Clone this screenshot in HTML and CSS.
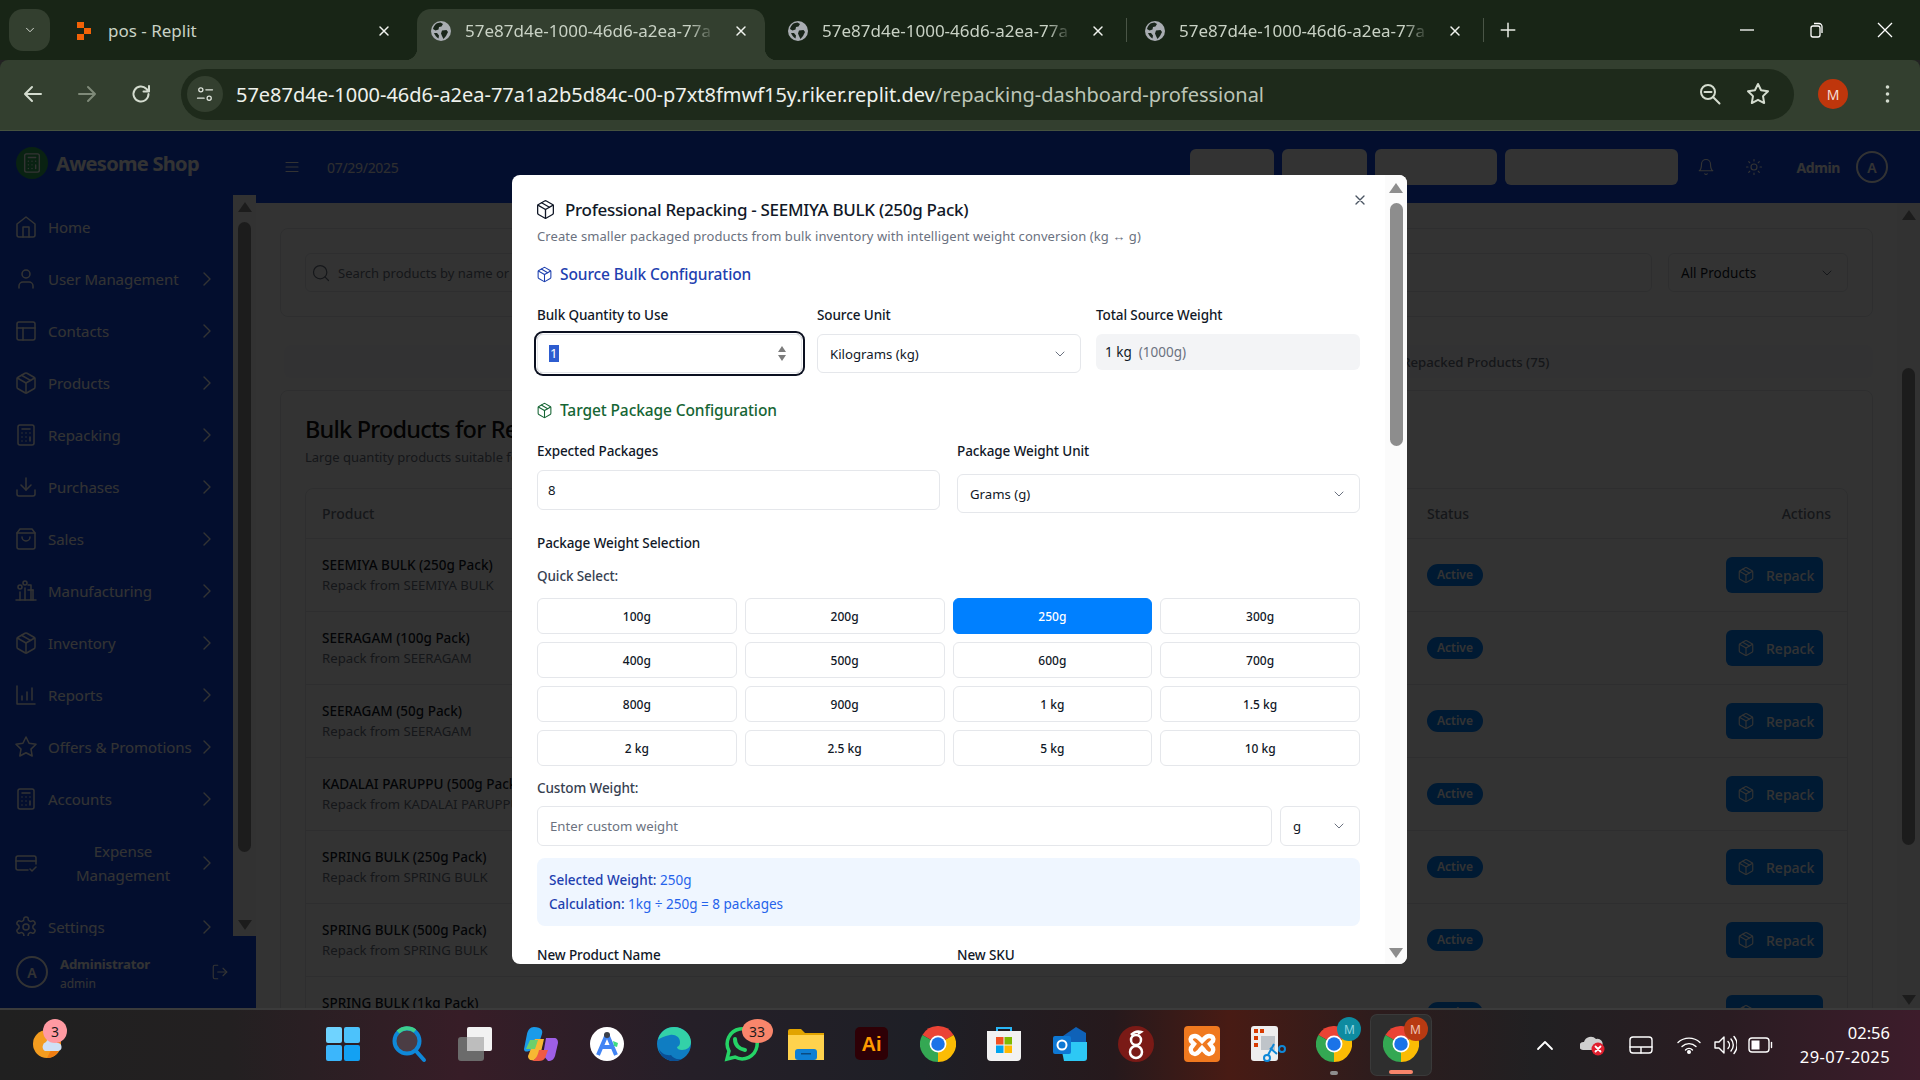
FILE: index.html
```html
<!DOCTYPE html>
<html lang="en">
<head>
<meta charset="UTF-8">
<meta name="viewport" content="width=device-width, initial-scale=1.0">
<title>Professional Repacking</title>
<link rel="stylesheet" href="styles.css">
</head>
<body>

<!-- icon sprite -->
<svg class="sprite" xmlns="http://www.w3.org/2000/svg">
    <symbol id="i-home" viewBox="0 0 24 24"><path d="m3 9 9-7 9 7v11a2 2 0 0 1-2 2H5a2 2 0 0 1-2-2z"/><polyline points="9 22 9 12 15 12 15 22"/></symbol>
    <symbol id="i-user" viewBox="0 0 24 24"><path d="M19 21v-2a4 4 0 0 0-4-4H9a4 4 0 0 0-4 4v2"/><circle cx="12" cy="7" r="4"/></symbol>
    <symbol id="i-layout" viewBox="0 0 24 24"><rect width="18" height="18" x="3" y="3" rx="2"/><path d="M3 9h18"/><path d="M9 21V9"/></symbol>
    <symbol id="i-package" viewBox="0 0 24 24"><path d="m7.5 4.27 9 5.15"/><path d="M21 8a2 2 0 0 0-1-1.73l-7-4a2 2 0 0 0-2 0l-7 4A2 2 0 0 0 3 8v8a2 2 0 0 0 1 1.73l7 4a2 2 0 0 0 2 0l7-4A2 2 0 0 0 21 16Z"/><path d="m3.3 7 8.7 5 8.7-5"/><path d="M12 22V12"/></symbol>
    <symbol id="i-calc" viewBox="0 0 24 24"><rect width="16" height="20" x="4" y="2" rx="2"/><path d="M8 6h8M16 14v4M16 10h.01M12 10h.01M8 10h.01M12 14h.01M8 14h.01M12 18h.01M8 18h.01"/></symbol>
    <symbol id="i-download" viewBox="0 0 24 24"><path d="M21 15v4a2 2 0 0 1-2 2H5a2 2 0 0 1-2-2v-4"/><polyline points="7 10 12 15 17 10"/><path d="M12 15V3"/></symbol>
    <symbol id="i-bag" viewBox="0 0 24 24"><path d="M6 2 3 6v14a2 2 0 0 0 2 2h14a2 2 0 0 0 2-2V6l-3-4Z"/><path d="M3 6h18"/><path d="M16 10a4 4 0 0 1-8 0"/></symbol>
    <symbol id="i-factory" viewBox="0 0 24 24"><path d="M2 21h20"/><path d="M6 21v-8M11 21V9M14 6h3v15M19 21V11"/><circle cx="6" cy="8" r="2"/><circle cx="11" cy="4" r="2"/><path d="M14 11h5"/></symbol>
    <symbol id="i-chart" viewBox="0 0 24 24"><path d="M3 3v18h18"/><path d="M8 17v-4M13 17V9M18 17V5"/></symbol>
    <symbol id="i-star" viewBox="0 0 24 24"><polygon points="12 2 15.09 8.26 22 9.27 17 14.14 18.18 21.02 12 17.77 5.82 21.02 7 14.14 2 9.27 8.91 8.26 12 2"/></symbol>
    <symbol id="i-card" viewBox="0 0 24 24"><path d="M22 13V7a2 2 0 0 0-2-2H4a2 2 0 0 0-2 2v10a2 2 0 0 0 2 2h10"/><path d="M2 10h20"/><path d="m16 18 2 2 4-4"/></symbol>
    <symbol id="i-gear" viewBox="0 0 24 24"><path d="M12.22 2h-.44a2 2 0 0 0-2 2v.18a2 2 0 0 1-1 1.73l-.43.25a2 2 0 0 1-2 0l-.15-.08a2 2 0 0 0-2.73.73l-.22.38a2 2 0 0 0 .73 2.73l.15.1a2 2 0 0 1 1 1.72v.51a2 2 0 0 1-1 1.74l-.15.09a2 2 0 0 0-.73 2.73l.22.38a2 2 0 0 0 2.73.73l.15-.08a2 2 0 0 1 2 0l.43.25a2 2 0 0 1 1 1.73V20a2 2 0 0 0 2 2h.44a2 2 0 0 0 2-2v-.18a2 2 0 0 1 1-1.73l.43-.25a2 2 0 0 1 2 0l.15.08a2 2 0 0 0 2.73-.73l.22-.39a2 2 0 0 0-.73-2.73l-.15-.08a2 2 0 0 1-1-1.74v-.5a2 2 0 0 1 1-1.74l.15-.09a2 2 0 0 0 .73-2.73l-.22-.38a2 2 0 0 0-2.73-.73l-.15.08a2 2 0 0 1-2 0l-.43-.25a2 2 0 0 1-1-1.73V4a2 2 0 0 0-2-2z"/><circle cx="12" cy="12" r="3"/></symbol>
    <symbol id="i-logout" viewBox="0 0 24 24"><path d="M9 21H5a2 2 0 0 1-2-2V5a2 2 0 0 1 2-2h4"/><polyline points="16 17 21 12 16 7"/><path d="M21 12H9"/></symbol>
    <symbol id="i-bell" viewBox="0 0 24 24"><path d="M6 8a6 6 0 0 1 12 0c0 7 3 9 3 9H3s3-2 3-9"/><path d="M10.3 21a1.94 1.94 0 0 0 3.4 0"/></symbol>
    <symbol id="i-sun" viewBox="0 0 24 24"><circle cx="12" cy="12" r="4"/><path d="M12 2v2M12 20v2M4.93 4.93l1.41 1.41M17.66 17.66l1.41 1.41M2 12h2M20 12h2M6.34 17.66l-1.41 1.41M19.07 4.93l-1.41 1.41"/></symbol>
    <symbol id="i-search" viewBox="0 0 24 24"><circle cx="11" cy="11" r="8"/><path d="m21 21-4.3-4.3"/></symbol>
    <symbol id="i-right" viewBox="0 0 24 24"><path d="m9 18 6-6-6-6"/></symbol>
    <symbol id="i-down" viewBox="0 0 24 24"><path d="m6 9 6 6 6-6"/></symbol>
    <symbol id="i-x" viewBox="0 0 24 24"><path d="M18 6 6 18M6 6l12 12"/></symbol>
    <symbol id="i-globe" viewBox="0 0 20 20"><circle cx="10" cy="10" r="10" fill="#a9adb2" stroke="none"/><path fill="#19251a" stroke="none" d="M6 2.2 9.5 1.5 12 3 10.5 5.5 8 6 7.5 8.5 4.5 9.5 2 8C2.5 5.5 4 3.5 6 2.2ZM11 9.5 15.500 9 17 11 15 15 12.5 18 11 15 10 12.5ZM3 12 6 12 8 14.5 7.5 17.5C5.5 16.5 4 14.5 3 12Z"/></symbol>
    <symbol id="i-chrome" viewBox="0 0 32 32">
        <path fill="#ea4335" stroke="none" d="M16 16 2.14 8A16 16 0 0 1 29.86 8Z"/>
        <path fill="#fbbc04" stroke="none" d="M16 16 29.86 8A16 16 0 0 1 16 32Z"/>
        <path fill="#34a853" stroke="none" d="M16 16V32A16 16 0 0 1 2.14 8Z"/>
        <circle cx="16" cy="16" r="7.5" fill="#fff" stroke="none"/>
        <circle cx="16" cy="16" r="6" fill="#1a73e8" stroke="none"/>
    </symbol>
</svg>

<!-- browser chrome -->
<div class="tabstrip">
    <div class="tab-menu"><svg class="ico ico-14"><use href="#i-down"/></svg></div>
    <div class="tab">
        <svg class="tab-fav" viewBox="0 0 20 20"><path fill="#f26207" d="M3 1h7v6H3zM10 7h7v6h-7zM3 13h7v6H3z"/></svg>
        <span class="tab-title">pos - Replit</span>
        <svg class="ico ico-16 tab-close"><use href="#i-x"/></svg>
    </div>
    <div class="tab tab-active">
        <svg class="tab-fav"><use href="#i-globe"/></svg>
        <span class="tab-title tab-fade">57e87d4e-1000-46d6-a2ea-77a</span>
        <svg class="ico ico-16 tab-close"><use href="#i-x"/></svg>
    </div>
    <div class="tab">
        <svg class="tab-fav"><use href="#i-globe"/></svg>
        <span class="tab-title tab-fade">57e87d4e-1000-46d6-a2ea-77a</span>
        <svg class="ico ico-16 tab-close"><use href="#i-x"/></svg>
    </div>
    <div class="tab-divider"></div>
    <div class="tab">
        <svg class="tab-fav"><use href="#i-globe"/></svg>
        <span class="tab-title tab-fade">57e87d4e-1000-46d6-a2ea-77a</span>
        <svg class="ico ico-16 tab-close"><use href="#i-x"/></svg>
    </div>
    <div class="tab-divider"></div>
    <svg class="ico ico-18 tab-new" viewBox="0 0 24 24"><path d="M12 3v18M3 12h18"/></svg>
    <div class="win-controls">
        <svg class="win-btn" viewBox="0 0 16 16"><path d="M1 8h14"/></svg>
        <svg class="win-btn" viewBox="0 0 16 16"><rect x="3" y="4" width="9" height="11" rx="2"/><path d="M6 1.5h5a3 3 0 0 1 3 3V11"/></svg>
        <svg class="win-btn" viewBox="0 0 16 16"><path d="m1 1 14 14M15 1 1 15"/></svg>
    </div>
</div>

<div class="toolbar">
    <svg class="nav-btn" viewBox="0 0 24 24"><path d="M20 12H4M11 5l-7 7 7 7"/></svg>
    <svg class="nav-btn nav-btn-off" viewBox="0 0 24 24"><path d="M4 12h16M13 5l7 7-7 7"/></svg>
    <svg class="nav-btn" viewBox="0 0 24 24"><path d="M19.5 12a7.5 7.5 0 1 1-2.2-5.3L20 9.5M20 4v5.5h-5.5"/></svg>
    <div class="omnibox">
        <div class="site-info">
            <svg class="ico ico-20" viewBox="0 0 24 24"><circle cx="7" cy="7" r="2.5"/><path d="M13 7h8M3 17h8"/><circle cx="17" cy="17" r="2.5"/></svg>
        </div>
        <div class="url">57e87d4e-1000-46d6-a2ea-77a1a2b5d84c-00-p7xt8fmwf15y.riker.replit.dev<span class="url-path">/repacking-dashboard-professional</span></div>
        <svg class="omni-ico" viewBox="0 0 24 24"><circle cx="10" cy="10" r="7"/><path d="M6.5 10h7M15 15l6.5 6.5"/></svg>
        <svg class="omni-ico omni-star"><use href="#i-star"/></svg>
    </div>
    <div class="profile">M</div>
    <svg class="kebab" viewBox="0 0 4 20"><circle cx="2" cy="3" r="1.8"/><circle cx="2" cy="10" r="1.8"/><circle cx="2" cy="17" r="1.8"/></svg>
</div>

<!-- the app -->
<div class="page">
    <aside class="sidebar">
        <div class="brand">
            <div class="brand-logo"><svg class="ico ico-22"><use href="#i-calc"/></svg></div>
            <span class="brand-name">Awesome Shop</span>
        </div>
        <div class="side-middle">
            <nav class="nav">
                <a class="nav-item"><svg class="ico ico-24"><use href="#i-home"/></svg><span>Home</span></a>
                <a class="nav-item"><svg class="ico ico-24"><use href="#i-user"/></svg><span>User Management</span><svg class="ico ico-24 nav-arrow"><use href="#i-right"/></svg></a>
                <a class="nav-item"><svg class="ico ico-24"><use href="#i-layout"/></svg><span>Contacts</span><svg class="ico ico-24 nav-arrow"><use href="#i-right"/></svg></a>
                <a class="nav-item"><svg class="ico ico-24"><use href="#i-package"/></svg><span>Products</span><svg class="ico ico-24 nav-arrow"><use href="#i-right"/></svg></a>
                <a class="nav-item"><svg class="ico ico-24"><use href="#i-calc"/></svg><span>Repacking</span><svg class="ico ico-24 nav-arrow"><use href="#i-right"/></svg></a>
                <a class="nav-item"><svg class="ico ico-24"><use href="#i-download"/></svg><span>Purchases</span><svg class="ico ico-24 nav-arrow"><use href="#i-right"/></svg></a>
                <a class="nav-item"><svg class="ico ico-24"><use href="#i-bag"/></svg><span>Sales</span><svg class="ico ico-24 nav-arrow"><use href="#i-right"/></svg></a>
                <a class="nav-item"><svg class="ico ico-24"><use href="#i-factory"/></svg><span>Manufacturing</span><svg class="ico ico-24 nav-arrow"><use href="#i-right"/></svg></a>
                <a class="nav-item"><svg class="ico ico-24"><use href="#i-package"/></svg><span>Inventory</span><svg class="ico ico-24 nav-arrow"><use href="#i-right"/></svg></a>
                <a class="nav-item"><svg class="ico ico-24"><use href="#i-chart"/></svg><span>Reports</span><svg class="ico ico-24 nav-arrow"><use href="#i-right"/></svg></a>
                <a class="nav-item"><svg class="ico ico-24"><use href="#i-star"/></svg><span>Offers &amp; Promotions</span><svg class="ico ico-24 nav-arrow"><use href="#i-right"/></svg></a>
                <a class="nav-item"><svg class="ico ico-24"><use href="#i-calc"/></svg><span>Accounts</span><svg class="ico ico-24 nav-arrow"><use href="#i-right"/></svg></a>
                <a class="nav-item nav-item-wrap"><svg class="ico ico-24"><use href="#i-card"/></svg><span>Expense<br>Management</span><svg class="ico ico-24 nav-arrow"><use href="#i-right"/></svg></a>
                <a class="nav-item"><svg class="ico ico-24"><use href="#i-gear"/></svg><span>Settings</span><svg class="ico ico-24 nav-arrow"><use href="#i-right"/></svg></a>
            </nav>
            <div class="scrollbar scrollbar-side">
                <i class="sb-up"></i>
                <b class="sb-thumb"></b>
                <i class="sb-down"></i>
            </div>
        </div>
        <div class="side-user">
            <div class="avatar">A</div>
            <div class="side-user-info">
                <strong>Administrator</strong>
                <small>admin</small>
            </div>
            <svg class="ico ico-18 side-logout"><use href="#i-logout"/></svg>
        </div>
    </aside>

    <div class="main">
        <header class="topbar">
            <svg class="ico ico-18 top-menu" viewBox="0 0 24 24"><path d="M4 6h16M4 12h16M4 18h16"/></svg>
            <span class="top-date">07/29/2025</span>
            <div class="top-actions">
                <div class="top-btn top-btn-1"></div>
                <div class="top-btn top-btn-2"></div>
                <div class="top-btn top-btn-3"></div>
                <div class="top-btn top-btn-4"></div>
            </div>
            <svg class="ico ico-18 top-bell"><use href="#i-bell"/></svg>
            <svg class="ico ico-18 top-sun"><use href="#i-sun"/></svg>
            <span class="top-user">Admin</span>
            <div class="avatar">A</div>
        </header>

        <div class="main-row">
            <div class="content">
                <div class="card filter-card">
                    <div class="search-box">
                        <svg class="ico ico-20"><use href="#i-search"/></svg>
                        <span>Search products by name or SKU...</span>
                    </div>
                    <div class="filter-select">
                        <span>All Products</span>
                        <svg class="ico ico-16"><use href="#i-down"/></svg>
                    </div>
                </div>

                <div class="view-tabs">
                    <span>Bulk Products (42)</span>
                    <span>Repacked Products (75)</span>
                </div>

                <div class="card table-card">
                    <h2>Bulk Products for Repacking</h2>
                    <p class="table-sub">Large quantity products suitable for repacking into smaller units</p>
                    <table class="products">
                        <thead>
                            <tr><th>Product</th><th>Status</th><th class="col-actions">Actions</th></tr>
                        </thead>
                        <tbody>
                            <tr>
                                <td><b>SEEMIYA BULK (250g Pack)</b><small>Repack from SEEMIYA BULK</small></td>
                                <td><span class="badge">Active</span></td>
                                <td class="col-actions"><span class="repack"><svg class="ico ico-18"><use href="#i-package"/></svg>Repack</span></td>
                            </tr>
                            <tr>
                                <td><b>SEERAGAM (100g Pack)</b><small>Repack from SEERAGAM</small></td>
                                <td><span class="badge">Active</span></td>
                                <td class="col-actions"><span class="repack"><svg class="ico ico-18"><use href="#i-package"/></svg>Repack</span></td>
                            </tr>
                            <tr>
                                <td><b>SEERAGAM (50g Pack)</b><small>Repack from SEERAGAM</small></td>
                                <td><span class="badge">Active</span></td>
                                <td class="col-actions"><span class="repack"><svg class="ico ico-18"><use href="#i-package"/></svg>Repack</span></td>
                            </tr>
                            <tr>
                                <td><b>KADALAI PARUPPU (500g Pack)</b><small>Repack from KADALAI PARUPPU</small></td>
                                <td><span class="badge">Active</span></td>
                                <td class="col-actions"><span class="repack"><svg class="ico ico-18"><use href="#i-package"/></svg>Repack</span></td>
                            </tr>
                            <tr>
                                <td><b>SPRING BULK (250g Pack)</b><small>Repack from SPRING BULK</small></td>
                                <td><span class="badge">Active</span></td>
                                <td class="col-actions"><span class="repack"><svg class="ico ico-18"><use href="#i-package"/></svg>Repack</span></td>
                            </tr>
                            <tr>
                                <td><b>SPRING BULK (500g Pack)</b><small>Repack from SPRING BULK</small></td>
                                <td><span class="badge">Active</span></td>
                                <td class="col-actions"><span class="repack"><svg class="ico ico-18"><use href="#i-package"/></svg>Repack</span></td>
                            </tr>
                            <tr>
                                <td><b>SPRING BULK (1kg Pack)</b><small>Repack from SPRING BULK</small></td>
                                <td><span class="badge">Active</span></td>
                                <td class="col-actions"><span class="repack"><svg class="ico ico-18"><use href="#i-package"/></svg>Repack</span></td>
                            </tr>
                        </tbody>
                    </table>
                </div>
            </div>
            <div class="scrollbar scrollbar-main">
                <i class="sb-up"></i>
                <b class="sb-thumb"></b>
                <i class="sb-down"></i>
            </div>
        </div>
    </div>

    <div class="overlay"></div>

    <div class="modal">
        <div class="modal-body">
            <h3 class="modal-title"><svg class="ico"><use href="#i-package"/></svg>Professional Repacking - SEEMIYA BULK (250g Pack)</h3>
            <p class="modal-desc">Create smaller packaged products from bulk inventory with intelligent weight conversion (kg ↔ g)</p>

            <h4 class="section section-source"><svg class="ico"><use href="#i-package"/></svg>Source Bulk Configuration</h4>
            <div class="form-row form-row-3">
                <div>
                    <label>Bulk Quantity to Use</label>
                    <div class="field field-focus"><span class="selected">1</span><span class="spinner"><i></i><i></i></span></div>
                </div>
                <div>
                    <label>Source Unit</label>
                    <div class="field field-select">Kilograms (kg)<svg class="ico ico-16"><use href="#i-down"/></svg></div>
                </div>
                <div>
                    <label>Total Source Weight</label>
                    <div class="readout">1 kg <span>(1000g)</span></div>
                </div>
            </div>

            <h4 class="section section-target"><svg class="ico"><use href="#i-package"/></svg>Target Package Configuration</h4>
            <div class="form-row form-row-2">
                <div>
                    <label>Expected Packages</label>
                    <div class="field field-tight">8</div>
                </div>
                <div>
                    <label>Package Weight Unit</label>
                    <div class="field field-select">Grams (g)<svg class="ico ico-16"><use href="#i-down"/></svg></div>
                </div>
            </div>

            <label class="weight-label">Package Weight Selection</label>
            <label class="quick-label">Quick Select:</label>
            <div class="weights">
                <button>100g</button><button>200g</button><button class="weight-on">250g</button><button>300g</button>
                <button>400g</button><button>500g</button><button>600g</button><button>700g</button>
                <button>800g</button><button>900g</button><button>1 kg</button><button>1.5 kg</button>
                <button>2 kg</button><button>2.5 kg</button><button>5 kg</button><button>10 kg</button>
            </div>
            <label class="custom-label">Custom Weight:</label>
            <div class="custom-row">
                <div class="field field-ph">Enter custom weight</div>
                <div class="field field-select">g<svg class="ico ico-16"><use href="#i-down"/></svg></div>
            </div>
            <div class="calc">
                <p><b>Selected Weight:</b> 250g</p>
                <p><b>Calculation:</b> 1kg ÷ 250g = 8 packages</p>
            </div>
            <div class="form-row form-row-2 last-row">
                <label>New Product Name</label>
                <label>New SKU</label>
            </div>
        </div>
        <svg class="ico ico-16 modal-close"><use href="#i-x"/></svg>
        <div class="scrollbar scrollbar-modal">
            <i class="sb-up"></i>
            <b class="sb-thumb"></b>
            <i class="sb-down"></i>
        </div>
    </div>
</div>

<!-- windows taskbar -->
<div class="taskbar">
    <div class="task-left">
        <div class="task-app">
            <svg viewBox="0 0 36 36"><circle cx="16" cy="18" r="14" fill="#f39c1f"/><path fill="#ef7d12" d="M16 32a14 14 0 0 0 11-22z"/><path fill="#cfe0f5" d="M14 25a5 5 0 0 1 1-9 6 6 0 0 1 11 1 4 4 0 0 1 1 8z"/></svg>
            <span class="task-badge task-badge-pink">3</span>
        </div>
    </div>
    <div class="task-apps">
        <div class="task-app">
            <svg viewBox="0 0 36 36"><rect x="1" y="1" width="16" height="16" rx="2" fill="#6fd3ff"/><rect x="19" y="1" width="16" height="16" rx="2" fill="#4cc2fb"/><rect x="1" y="19" width="16" height="16" rx="2" fill="#3cb6fb"/><rect x="19" y="19" width="16" height="16" rx="2" fill="#13a1f3"/></svg>
        </div>
        <div class="task-app">
            <svg viewBox="0 0 36 36" fill="none"><circle cx="16" cy="15" r="12.5" fill="#4b3d44" stroke="#0f88d8" stroke-width="4"/><path d="M7 6a12.5 12.5 0 0 1 17-1" stroke="#3dcf8e" stroke-width="4"/><path d="m25 25 8 9" stroke="#0f88d8" stroke-width="4" stroke-linecap="round"/></svg>
        </div>
        <div class="task-app">
            <svg viewBox="0 0 36 36"><rect x="1" y="11" width="26" height="24" rx="3" fill="#6b6b6b"/><rect x="10" y="1" width="25" height="24" rx="2" fill="#f2f2f2"/><rect x="10" y="11" width="17" height="14" fill="#bdbdbd"/></svg>
        </div>
        <div class="task-app">
            <svg viewBox="0 0 36 36"><path fill="#1a9bea" d="M11 1c-4 0-6 3-7 7L1 23c0 3 3 3 5 2l8-2 5-15c1-3 0-7-8-7z"/><path fill="#9e5fe6" d="M23 12h8c3 0 4 2 4 5l-3 13c-1 3-3 5-7 5l-5-6z"/><path fill="#f7b733" d="M12 13h9l-3 13c-1 3-3 6-7 8-4 1-6-1-6-4z"/><path fill="#ef5a43" d="M16 24h9l-3 8c-1 2-3 3-6 3h-7c4-2 6-6 7-11z"/><path fill="#6ccf6c" d="M7 14h8l-3 9H3z"/></svg>
        </div>
        <div class="task-app">
            <svg viewBox="0 0 36 36"><circle cx="18" cy="18" r="17" fill="#fff"/><path fill="none" stroke="#4285f4" stroke-width="4" d="M18 8 9 29M18 8l9 21M11 21h14"/><circle cx="18" cy="9" r="3" fill="#3a3f4a"/><path fill="#3ddc84" d="m24 15 5 2-1 4-3-1z"/></svg>
        </div>
        <div class="task-app">
            <svg viewBox="0 0 36 36"><circle cx="18" cy="18" r="17" fill="#0f7dc2"/><path fill="#33d1a8" d="M2 14C4 5 11 1 18 1c9 0 17 7 17 15 0 5-4 8-9 8-3 0-5-1-5-3 2-1 3-2 3-5 0-5-5-8-10-7-6 1-10 3-12 5z"/><path fill="#0a4f96" d="M16 35C9 34 4 29 3 23c2 4 7 7 12 6 2 3 6 5 11 4-3 2-7 2-10 2z"/></svg>
        </div>
        <div class="task-app">
            <svg viewBox="0 0 36 36" fill="none"><path stroke="#25d366" stroke-width="3.5" d="M5 33l2-8a15 15 0 1 1 6 6z"/><path stroke="#25d366" stroke-width="4" stroke-linecap="round" d="M13 13c0 6 4 10 10 11"/></svg>
            <span class="task-badge task-badge-salmon">33</span>
        </div>
        <div class="task-app">
            <svg viewBox="0 0 36 36"><path fill="#e2a400" d="M0 5a2 2 0 0 1 2-2h11l4 4h19v6H0z"/><path fill="#ffd24d" d="M0 9h36v25H0z"/><rect x="7" y="23" width="22" height="11" rx="3" fill="#0f7fd4"/><rect x="13" y="27" width="10" height="1.5" fill="#0a4a80"/></svg>
        </div>
        <div class="task-app">
            <svg viewBox="0 0 36 36"><rect x="1" y="1" width="33" height="33" rx="5" fill="#2e0006"/><text x="17.5" y="25" class="ai-text">Ai</text></svg>
        </div>
        <div class="task-app"><svg viewBox="0 0 36 36"><use href="#i-chrome" width="36" height="36"/></svg></div>
        <div class="task-app">
            <svg viewBox="0 0 36 36"><path fill="none" stroke="#29b6f6" stroke-width="2" d="M11 6V2h14v4"/><path fill="#f2f2f2" d="M1 5h34v26a4 4 0 0 1-4 4H5a4 4 0 0 1-4-4z"/><rect x="10" y="11" width="7.5" height="7.5" fill="#f25022"/><rect x="18.5" y="11" width="7.5" height="7.5" fill="#7fba00"/><rect x="10" y="19.5" width="7.5" height="7.5" fill="#00a4ef"/><rect x="18.5" y="19.5" width="7.5" height="7.5" fill="#ffb900"/></svg>
        </div>
        <div class="task-app">
            <svg viewBox="0 0 36 36"><path fill="#0f62b8" d="M11 10 24 1l10 6v10L22 25z"/><path fill="#2dc8f5" d="M8 16h27v16a3 3 0 0 1-3 3H12z"/><rect x="1" y="10" width="18" height="18" rx="2" fill="#0e78d4"/><circle cx="10" cy="19" r="4.5" fill="none" stroke="#fff" stroke-width="2"/></svg>
        </div>
        <div class="task-app">
            <svg viewBox="0 0 36 36" fill="none"><circle cx="18" cy="18" r="18" fill="#7a1a16"/><circle cx="18" cy="14" r="5" stroke="#fff" stroke-width="2.5"/><circle cx="18" cy="26" r="6" stroke="#fff" stroke-width="2.5"/><path stroke="#fff" stroke-width="2.5" d="M13 9c3-3 7-4 10-3l-3 2"/></svg>
        </div>
        <div class="task-app">
            <svg viewBox="0 0 36 36"><rect width="36" height="36" rx="4" fill="#f0791f"/><path fill="none" stroke="#fff" stroke-width="4.5" d="M11 10c-4 0-5 3-4 5l3 3-3 4c-1 3 1 6 4 6 3 0 5-4 7-6 2 2 4 6 7 6 3 0 5-3 4-6l-3-4 3-3c1-2 0-5-4-5-3 0-5 3-7 5-2-2-4-5-7-5z"/></svg>
        </div>
        <div class="task-app">
            <svg viewBox="0 0 36 36"><rect x="1" y="0" width="27" height="35" rx="3" fill="#eeeeee"/><path fill="#d83b01" d="M4 3h4v4H4zM10 3h4v4h-4zM4 10h4v4H4zM4 17h4v4H4z"/><rect x="11" y="10" width="14" height="14" fill="#bfc4c9"/><path stroke="#0f88d8" stroke-width="2" fill="none" d="m20 22 7 6M24 18l-6 11"/><circle cx="32" cy="23" r="3" fill="none" stroke="#0f88d8" stroke-width="2"/><circle cx="17" cy="32" r="3" fill="none" stroke="#0f88d8" stroke-width="2"/></svg>
        </div>
        <div class="task-app">
            <svg viewBox="0 0 36 36"><use href="#i-chrome" width="36" height="36"/></svg>
            <span class="task-badge task-badge-teal">M</span>
            <i class="task-dot"></i>
        </div>
        <div class="task-app task-app-active">
            <svg viewBox="0 0 36 36"><use href="#i-chrome" width="36" height="36"/></svg>
            <span class="task-badge task-badge-red">M</span>
            <i class="task-line"></i>
        </div>
    </div>
    <div class="tray">
        <svg class="tray-ico tray-up" viewBox="0 0 20 20"><path d="m3 14 7-7 7 7"/></svg>
        <svg class="tray-ico tray-cloud" viewBox="0 0 26 22"><path fill="#cfcfcf" stroke="none" d="M3 16a4 4 0 0 1 1-8 7 7 0 0 1 12-3 5 5 0 0 1 6 7l-3 4z"/><circle cx="18" cy="15" r="6.5" fill="#e01f2e" stroke="none"/><path stroke-width="1.8" d="m15.5 12.5 5 5M20.5 12.5l-5 5"/></svg>
        <svg class="tray-ico tray-pad" viewBox="0 0 24 18"><rect x="1" y="1" width="22" height="16" rx="3"/><path d="M1 11h22M12 11v6"/></svg>
        <svg class="tray-ico tray-wifi" viewBox="0 0 24 18"><path d="M1 6.5a16 16 0 0 1 22 0M5 10.5a10 10 0 0 1 14 0M8.5 14a5 5 0 0 1 7 0"/><circle cx="12" cy="16" r="1.3" fill="#fff"/></svg>
        <svg class="tray-ico tray-vol" viewBox="0 0 24 20"><path d="M2 7h4l5-5v16l-5-5H2zM15 6.5a5 5 0 0 1 0 7M18 4a9 9 0 0 1 0 12M21 1.5a13 13 0 0 1 0 17"/></svg>
        <svg class="tray-ico tray-bat" viewBox="0 0 26 16"><rect x="1" y="1" width="20" height="14" rx="3"/><rect x="3.5" y="3.5" width="8" height="9" fill="#fff" stroke="none"/><path d="M23.5 5.5v5"/></svg>
        <div class="clock">
            <span>02:56</span>
            <span class="clock-date">29-07-2025</span>
        </div>
    </div>
</div>

</body>
</html>
```

FILE: styles.css
```css
* {
    box-sizing: border-box;
}

body {
    margin: 0;
    width: 1920px;
    height: 1080px;
    overflow: hidden;
    display: flex;
    flex-direction: column;
    font-family: "Noto Sans", "Open Sans", Arial, sans-serif;
    font-size: 14px;
    color: #111827;
    background: #222;
}

p, h2, h3, h4 {
    margin: 0;
}

.sprite {
    display: none;
}

.ico {
    fill: none;
    stroke: currentColor;
    stroke-width: 1.5;
    stroke-linecap: round;
    stroke-linejoin: round;
    flex: none;
}

.ico-14 { width: 14px; height: 14px; }
.ico-16 { width: 16px; height: 16px; }
.ico-18 { width: 18px; height: 18px; }
.ico-20 { width: 20px; height: 20px; }
.ico-22 { width: 22px; height: 22px; }
.ico-24 { width: 24px; height: 24px; }

/* browser tabs */
.tabstrip {
    height: 60px;
    flex: none;
    display: flex;
    align-items: flex-end;
    background: #182516;
    color: #c9d2c5;
}

.tab-menu {
    width: 41px;
    height: 42px;
    margin: 0 10px 9px 9px;
    border-radius: 14px;
    background: #333f2f;
    color: #e8ece5;
    stroke-width: 2.5;
    display: flex;
    align-items: center;
    justify-content: center;
}

.tab {
    width: 348px;
    height: 51px;
    margin-right: 9px;
    padding: 0 0 8px 14px;
    display: flex;
    align-items: center;
    position: relative;
    border-radius: 14px 14px 0 0;
}

.tab-active {
    background: #333f2f;
}

.tab-active::before,
.tab-active::after {
    content: "";
    position: absolute;
    bottom: 0;
    width: 12px;
    height: 12px;
}

.tab-active::before {
    left: -12px;
    background: radial-gradient(circle at 0 0, transparent 12px, #333f2f 12.5px);
}

.tab-active::after {
    right: -12px;
    background: radial-gradient(circle at 100% 0, transparent 12px, #333f2f 12.5px);
}

.tab-fav {
    width: 20px;
    height: 20px;
    flex: none;
}

.tab-title {
    width: 250px;
    margin-left: 14px;
    white-space: nowrap;
    font-size: 17px;
}

.tab-fade {
    -webkit-mask-image: linear-gradient(to right, #000 90%, transparent 100%);
    mask-image: linear-gradient(to right, #000 90%, transparent 100%);
}

.tab-close {
    margin-left: 18px;
    color: #f1f4ef;
    stroke-width: 2.2;
}

.tab-divider {
    width: 1px;
    height: 24px;
    margin: 0 4px 18px -5px;
    background: #4a5546;
}

.tab-new {
    margin: 0 0 21px 11px;
    color: #e8ece5;
    stroke-width: 2;
}

.win-controls {
    margin-left: auto;
    margin-bottom: 22px;
    display: flex;
    gap: 53px;
    padding-right: 27px;
}

.win-btn {
    width: 16px;
    height: 16px;
    fill: none;
    stroke: #fff;
    stroke-width: 1.3;
}

/* browser toolbar */
.toolbar {
    height: 71px;
    flex: none;
    display: flex;
    align-items: center;
    padding-bottom: 2px;
    background: #333f2f;
    border-bottom: 1px solid #46523f;
    border-radius: 8px 8px 0 0;
}

.nav-btn {
    width: 24px;
    height: 24px;
    margin-left: 21px;
    margin-right: 9px;
    fill: none;
    stroke: #d4dccf;
    stroke-width: 2;
    stroke-linecap: round;
    stroke-linejoin: round;
}

.nav-btn-off {
    stroke: #7f8a79;
}

.omnibox {
    width: 1613px;
    height: 51px;
    margin-left: 19px;
    border-radius: 26px;
    background: #1e2a1b;
    display: flex;
    align-items: center;
    padding: 0 24px 0 6px;
}

.site-info {
    width: 36px;
    height: 36px;
    border-radius: 50%;
    background: #333f2f;
    color: #e1e6de;
    display: flex;
    align-items: center;
    justify-content: center;
}

.url {
    flex: 1;
    margin-left: 13px;
    font-size: 20px;
    letter-spacing: -0.02px;
    white-space: nowrap;
    color: #eef1ec;
}

.url-path {
    color: #bcc5b7;
}

.omni-ico {
    width: 24px;
    height: 24px;
    fill: none;
    stroke: #d4dccf;
    stroke-width: 2;
    stroke-linecap: round;
    stroke-linejoin: round;
    margin-left: 24px;
}

.profile {
    width: 30px;
    height: 30px;
    margin-left: 24px;
    border-radius: 50%;
    background: #bf360c;
    color: #f5ddd5;
    font-size: 14px;
    display: flex;
    align-items: center;
    justify-content: center;
}

.kebab {
    width: 5px;
    height: 20px;
    margin-left: 37px;
    fill: #d4dccf;
}

/* app page, dimmed by the overlay */
.page {
    flex: 1;
    min-height: 0;
    position: relative;
    overflow: hidden;
    display: flex;
    background: #fff;
}

.sidebar {
    width: 256px;
    flex: none;
    display: flex;
    flex-direction: column;
    background: #1148e6;
    color: #fff;
}

.brand {
    height: 64px;
    flex: none;
    display: flex;
    align-items: center;
    padding-left: 16px;
    gap: 8px;
}

.brand-logo {
    width: 32px;
    height: 32px;
    border-radius: 50%;
    background: #2ea85a;
    display: flex;
    align-items: center;
    justify-content: center;
}

.brand-name {
    font-size: 20px;
    font-weight: 700;
    letter-spacing: -0.7px;
}

.side-middle {
    flex: 1;
    min-height: 0;
    display: flex;
}

.nav {
    flex: 1;
    min-width: 0;
    padding-top: 6px;
    overflow: hidden;
}

.nav-item {
    height: 52px;
    display: flex;
    align-items: center;
    padding: 0 14px;
    gap: 10px;
    font-size: 15px;
    letter-spacing: -0.05px;
    white-space: nowrap;
}

.nav-item span {
    margin-right: -10px;
}

.nav-arrow {
    margin-left: auto;
    stroke-width: 1.4;
}

.nav-item-wrap {
    height: 76px;
    line-height: 24px;
}

.nav-item-wrap span {
    flex: 1;
    margin-right: -13px;
    text-align: center;
}

.side-user {
    height: 72px;
    flex: none;
    display: flex;
    align-items: center;
    padding: 0 27px 0 16px;
    gap: 12px;
}

.avatar {
    width: 32px;
    height: 32px;
    flex: none;
    border-radius: 50%;
    border: 2px solid #fff;
    font-weight: 600;
    font-size: 14px;
    color: #fff;
    display: flex;
    align-items: center;
    justify-content: center;
}

.side-user-info {
    flex: 1;
    padding-top: 3px;
    display: flex;
    flex-direction: column;
    line-height: 19px;
}

.side-user-info strong {
    font-size: 13.2px;
    letter-spacing: -0.2px;
}

.side-user-info small {
    font-size: 12px;
}

/* fake scrollbars */
.scrollbar {
    width: 23px;
    flex: none;
    display: flex;
    flex-direction: column;
    align-items: center;
    background: #fbfbfb;
}

.sb-up,
.sb-down {
    width: 0;
    height: 0;
    flex: none;
    border-left: 7px solid transparent;
    border-right: 7px solid transparent;
}

.sb-up {
    border-bottom: 10px solid #8d8d8d;
}

.sb-down {
    margin-top: auto;
    border-top: 10px solid #8d8d8d;
}

.sb-thumb {
    width: 13px;
    flex: none;
    border-radius: 7px;
    background: #8d8d8d;
}

.scrollbar-side {
    padding: 7px 0 6px;
}

.scrollbar-side .sb-thumb {
    height: 630px;
    margin-top: 10px;
}

.scrollbar-main {
    padding: 7px 0 3px;
}

.scrollbar-main .sb-thumb {
    height: 477px;
    margin-top: 148px;
}

.scrollbar-modal {
    width: 22px;
    padding: 8px 0 6px;
}

.scrollbar-modal .sb-thumb {
    height: 243px;
    margin-top: 10px;
}

/* main column */
.main {
    flex: 1;
    min-width: 0;
    display: flex;
    flex-direction: column;
}

.topbar {
    height: 72px;
    flex: none;
    display: flex;
    align-items: center;
    padding: 0 32px 0 27px;
    background: #1148e6;
    color: #fff;
}

.top-date {
    margin-left: 26px;
    color: #e5e7eb;
    font-size: 14px;
    letter-spacing: -0.3px;
}

.top-actions {
    margin-left: auto;
    display: flex;
    gap: 8px;
}

.top-btn {
    height: 36px;
    border-radius: 6px;
    background: #fff;
}

.top-btn-1 { width: 84px; }
.top-btn-2 { width: 85px; }
.top-btn-3 { width: 122px; }
.top-btn-4 { width: 173px; }

.top-bell {
    margin-left: 19px;
}

.top-sun {
    margin-left: 30px;
}

.top-user {
    margin: 0 16px 0 34px;
    font-weight: 700;
    letter-spacing: -0.4px;
}

.main-row {
    flex: 1;
    min-height: 0;
    display: flex;
}

.content {
    flex: 1;
    min-width: 0;
    padding: 25px 24px 0;
    overflow: hidden;
}

.card {
    border: 1px solid #e5e7eb;
    border-radius: 8px;
    background: #fff;
}

.filter-card {
    padding: 24px;
    display: flex;
    gap: 16px;
}

.search-box {
    flex: 1;
    min-width: 0;
    height: 39px;
    padding-left: 5px;
    gap: 7px;
    border: 1px solid #e5e7eb;
    border-radius: 6px;
    color: #6b7280;
    font-size: 13px;
    display: flex;
    align-items: center;
}

.filter-select {
    width: 180px;
    height: 39px;
    padding: 0 12px;
    border: 1px solid #e5e7eb;
    border-radius: 6px;
    display: flex;
    align-items: center;
    justify-content: space-between;
    font-size: 13.5px;
}

.filter-select svg {
    color: #6b7280;
}

.view-tabs {
    height: 33px;
    margin: 28px 0 12px 4px;
    display: grid;
    grid-template-columns: 1fr 1fr;
    align-items: center;
    text-align: center;
    background: #fbfbfc;
    border-radius: 6px;
    color: #6b7280;
    font-weight: 500;
    font-size: 13.2px;
}

.table-card {
    padding: 23px 24px 24px;
}

.table-card h2 {
    font-size: 23.5px;
    font-weight: 500;
    line-height: 30px;
    letter-spacing: -0.8px;
    color: #111;
    white-space: nowrap;
}

.table-sub {
    margin-top: 3px;
    font-size: 13px;
    line-height: 20px;
    color: #6b7280;
    white-space: nowrap;
}

.products {
    width: 100%;
    margin-top: 21px;
    border-collapse: separate;
    border-spacing: 0;
    border: 1px solid #e5e7eb;
    border-radius: 8px;
    table-layout: fixed;
}

.products th {
    height: 49px;
    padding: 0 16px;
    text-align: left;
    font-weight: 500;
    font-size: 14px;
    color: #6b7280;
}

.products th:nth-child(1) { width: 1105px; }
.products th:nth-child(2) { width: 220px; }

.products td {
    height: 73px;
    padding: 0 16px;
    border-top: 1px solid #e5e7eb;
}

.products td b {
    display: block;
    font-weight: 500;
    font-size: 13.5px;
    white-space: nowrap;
}

.products td small {
    display: block;
    margin-top: 2px;
    font-size: 13.2px;
    color: #6b7280;
    white-space: nowrap;
}

.products .col-actions {
    text-align: right;
}

.badge {
    display: inline-block;
    width: 56px;
    height: 22px;
    line-height: 22px;
    border-radius: 11px;
    background: #0080ff;
    color: #fff;
    text-align: center;
    font-size: 12px;
    font-weight: 600;
}

.repack {
    width: 97px;
    height: 36px;
    margin-right: 8px;
    padding-left: 11px;
    gap: 11px;
    display: inline-flex;
    align-items: center;
    border-radius: 6px;
    background: #0080ff;
    color: #fff;
    font-size: 14px;
    font-weight: 500;
    vertical-align: middle;
}

/* overlay and the dialog on top */
.overlay {
    position: absolute;
    inset: 0;
    background: rgba(0, 0, 0, 0.8);
}

.modal {
    position: absolute;
    left: 512px;
    top: 44px;
    width: 895px;
    height: 789px;
    display: flex;
    overflow: hidden;
    border-radius: 8px;
    background: #fff;
}

.modal-body {
    flex: 1;
    min-width: 0;
    padding: 23px 25px 0 25px;
    overflow: hidden;
}

.modal-title {
    height: 22px;
    display: flex;
    align-items: center;
    gap: 9px;
    font-size: 17px;
    font-weight: 500;
    letter-spacing: -0.3px;
    color: #111827;
}

.modal-title svg {
    width: 21px;
    height: 21px;
    margin-left: -2px;
}

.modal-desc {
    margin-top: 6px;
    font-size: 13px;
    line-height: 20px;
    letter-spacing: 0.08px;
    color: #6b7280;
}

.modal-close {
    position: absolute;
    left: 840px;
    top: 17px;
    color: #4b5563;
    stroke-width: 2;
}

.section {
    height: 24px;
    display: flex;
    align-items: center;
    gap: 7px;
    font-size: 15.5px;
    font-weight: 500;
    letter-spacing: -0.1px;
}

.section svg {
    width: 17px;
    height: 17px;
    margin-left: -1px;
}

.section-source {
    margin-top: 16px;
    color: #1e40af;
}

.section-target {
    margin-top: 25px;
    color: #166534;
}

label {
    display: block;
    font-size: 13.5px;
    font-weight: 500;
    line-height: 20px;
    letter-spacing: -0.1px;
    color: #111827;
}

.form-row {
    display: grid;
}

.form-row-3 {
    margin-top: 19px;
    grid-template-columns: 264.5px 263.5px 263.5px;
    column-gap: 15.5px;
}

.form-row-2 {
    margin-top: 19px;
    grid-template-columns: 403px 403px;
    column-gap: 17px;
}

.field {
    height: 39px;
    margin-top: 9px;
    padding: 0 12px;
    border: 1px solid #e5e7eb;
    border-radius: 6px;
    display: flex;
    align-items: center;
    font-size: 13.2px;
    color: #111827;
}

.field-tight {
    height: 40px;
    padding-left: 10px;
}

.form-row-2 .field-select {
    margin-top: 13px;
}

.field-select {
    justify-content: space-between;
}

.field-select svg {
    color: #6b7280;
}

.field-focus {
    padding-left: 11px;
    justify-content: space-between;
    box-shadow: 0 0 0 1px #fff, 0 0 0 3px #0b1020;
}

.selected {
    background: #2d5ccf;
    color: #fff;
    padding: 0 1px;
    line-height: 17px;
}

.spinner {
    display: flex;
    flex-direction: column;
    gap: 3px;
    margin-right: 3px;
}

.spinner i {
    width: 0;
    height: 0;
    border-left: 4.5px solid transparent;
    border-right: 4.5px solid transparent;
}

.spinner i:first-child {
    border-bottom: 6px solid #7c7c7c;
}

.spinner i:last-child {
    border-top: 6px solid #7c7c7c;
}

.readout {
    height: 36px;
    margin-top: 9px;
    padding: 0 9px;
    border-radius: 6px;
    background: #f3f4f6;
    display: flex;
    align-items: center;
    gap: 7px;
    font-size: 13.5px;
}

.readout span {
    color: #6b7280;
}

.weight-label {
    margin-top: 20px;
}

.quick-label {
    margin-top: 13px;
    color: #374151;
}

.weights {
    margin-top: 12px;
    display: grid;
    grid-template-columns: repeat(4, 1fr);
    gap: 8px;
}

.weights button {
    height: 36px;
    padding: 0;
    border: 1px solid #e5e7eb;
    border-radius: 6px;
    background: #fff;
    color: #111827;
    font: 500 12px "Noto Sans", "Open Sans", Arial, sans-serif;
}

.weights .weight-on {
    background: #0080ff;
    border-color: #0080ff;
    color: #fff;
}

.custom-label {
    margin-top: 12px;
    color: #374151;
}

.custom-row {
    margin-top: 8px;
    display: grid;
    grid-template-columns: 735px 80px;
    column-gap: 8px;
}

.custom-row .field {
    height: 40px;
    margin-top: 0;
}

.field-ph {
    color: #6b7280;
}

.calc {
    height: 68px;
    margin-top: 12px;
    padding: 10px 12px;
    border-radius: 8px;
    background: #eff6ff;
    font-size: 13.5px;
    line-height: 24px;
    color: #2563eb;
}

.calc b {
    font-weight: 500;
    color: #1e40af;
}

.last-row {
    margin-top: 19px;
}

/* taskbar */
.taskbar {
    height: 72px;
    flex: none;
    display: flex;
    align-items: center;
    border-top: 2px solid #3b3b3b;
    background: linear-gradient(90deg, #202020 0%, #232021 12%, #371d27 24%, #251f28 36%, #1e1f26 48%, #26191c 58%, #481b14 64%, #2c1c1d 72%, #212022 80%, #2a1c22 90%, #3d1c2b 100%);
}

.task-left {
    width: 310px;
    flex: none;
}

.task-apps {
    display: flex;
}

.task-app {
    width: 66.1px;
    height: 60px;
    position: relative;
    display: flex;
    align-items: center;
    justify-content: center;
    padding-bottom: 2px;
}

.task-app > svg {
    width: 36px;
    height: 36px;
    overflow: visible;
}

.task-left .task-app {
    margin-left: 16px;
}

.task-app-active {
    width: 60px;
    margin: 0 3px;
    border-radius: 6px;
    background: #2e2e2e;
    box-shadow: 0 0 0 1px #3a3a3a;
}

.task-badge {
    position: absolute;
    top: 4px;
    left: 37px;
    width: 24px;
    height: 24px;
    border-radius: 50%;
    display: flex;
    align-items: center;
    justify-content: center;
    font-size: 14px;
    color: #1a1a1a;
}

.task-badge-pink {
    background: #ff9aa2;
    left: 27px;
}

.task-badge-salmon {
    left: 35px;
    width: 31px;
    background: #f8856b;
}

.task-badge-teal {
    top: 2px;
    left: 36px;
    background: #0e8ba0;
    color: #8fd6e0;
    font-size: 12px;
}

.task-badge-red {
    top: 2px;
    left: 33px;
    background: #b83a12;
    color: #f0c4b4;
    font-size: 12px;
}

.ai-text {
    font: 700 20px "Liberation Sans", Arial, sans-serif;
    fill: #ff9a00;
    text-anchor: middle;
}

.task-dot {
    position: absolute;
    bottom: 0;
    left: 29px;
    width: 8px;
    height: 4px;
    border-radius: 2px;
    background: #8e8e8e;
}

.task-line {
    position: absolute;
    bottom: 1px;
    left: 18px;
    width: 24px;
    height: 4px;
    border-radius: 2px;
    background: #f8856b;
}

.tray {
    margin-left: auto;
    padding-right: 30px;
    display: flex;
    align-items: center;
    color: #fff;
}

.tray-ico {
    fill: none;
    stroke: #fff;
    stroke-width: 1.4;
    stroke-linecap: round;
    stroke-linejoin: round;
}

.tray-up { width: 20px; height: 20px; stroke-width: 1.8; }
.tray-cloud { width: 26px; height: 22px; margin-left: 25px; }
.tray-pad { width: 24px; height: 18px; margin-left: 23px; }
.tray-wifi { width: 24px; height: 18px; margin-left: 24px; }
.tray-vol { width: 24px; height: 20px; margin-left: 12px; }
.tray-bat { width: 26px; height: 16px; margin-left: 11px; }

.clock {
    margin-left: 23px;
    width: 93px;
    display: flex;
    flex-direction: column;
    align-items: flex-end;
    font-size: 16.5px;
    line-height: 24px;
    white-space: nowrap;
}

.clock-date {
    letter-spacing: 0.4px;
}
```
